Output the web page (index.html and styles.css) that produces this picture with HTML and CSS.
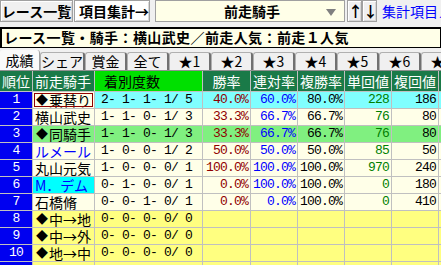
FILE: index.html
```html
<!DOCTYPE html>
<html lang="ja">
<head>
  <meta charset="UTF-8" />
  <title>集計 - 前走騎手</title>
  <link rel="stylesheet" href="styles.css">
</head>
<body>

  <!-- toolbar -->
  <div class="toolbar">
    <button class="btn btn-list">レース一覧</button>
    <button class="btn btn-agg">項目集計→</button>
    <div class="select"><span>前走騎手</span><i class="caret"></i></div>
    <button class="btn btn-arrow btn-up">↑</button>
    <button class="btn btn-arrow">↓</button>
    <a class="menu-link">集計項目メニュー</a>
  </div>

  <div class="title">レース一覧・騎手：横山武史／前走人気：前走１人気</div>

  <div class="tabs">
    <div class="tab active">成績</div>
    <div class="tab">シェア</div>
    <div class="tab">賞金</div>
    <div class="tab">全て</div>
    <div class="tab">★1</div>
    <div class="tab">★2</div>
    <div class="tab">★3</div>
    <div class="tab">★4</div>
    <div class="tab">★5</div>
    <div class="tab">★6</div>
    <div class="tab">★7</div>
  </div>

  <!-- result grid -->
  <div class="grid">
    <div class="row head">
      <div class="c-no">順位</div><div class="c-name">前走騎手</div><div class="c-rec">着別度数</div>
      <div>勝率</div><div>連対率</div><div>複勝率</div><div>単回値</div><div>複回値</div><div></div>
    </div>
    <div class="row cyan">
      <div class="c-no">1</div><div class="c-name selected"><span class="dia">◆</span>乗替り</div><div class="c-rec">2- 1- 1- 1/ 5</div>
      <div class="win">40.0%</div><div class="ren">60.0%</div><div class="num">80.0%</div><div class="tan">228</div><div class="num">186</div><div></div>
    </div>
    <div class="row cream">
      <div class="c-no">2</div><div class="c-name">横山武史</div><div class="c-rec">1- 1- 0- 1/ 3</div>
      <div class="win">33.3%</div><div class="ren">66.7%</div><div class="num">66.7%</div><div class="tan">76</div><div class="num">80</div><div></div>
    </div>
    <div class="row green">
      <div class="c-no">3</div><div class="c-name"><span class="dia">◆</span>同騎手</div><div class="c-rec">1- 1- 0- 1/ 3</div>
      <div class="win">33.3%</div><div class="ren">66.7%</div><div class="num">66.7%</div><div class="tan">76</div><div class="num">80</div><div></div>
    </div>
    <div class="row cream">
      <div class="c-no">4</div><div class="c-name blue">ルメール</div><div class="c-rec">1- 0- 0- 1/ 2</div>
      <div class="win">50.0%</div><div class="ren">50.0%</div><div class="num">50.0%</div><div class="tan">85</div><div class="num">50</div><div></div>
    </div>
    <div class="row cream">
      <div class="c-no">5</div><div class="c-name">丸山元気</div><div class="c-rec">1- 0- 0- 0/ 1</div>
      <div class="win">100.0%</div><div class="ren">100.0%</div><div class="num">100.0%</div><div class="tan">970</div><div class="num">240</div><div></div>
    </div>
    <div class="row cream">
      <div class="c-no">6</div><div class="c-name blue hl">M．デム</div><div class="c-rec">0- 1- 0- 0/ 1</div>
      <div class="win">0.0%</div><div class="ren">100.0%</div><div class="num">100.0%</div><div class="tan">0</div><div class="num">180</div><div></div>
    </div>
    <div class="row cream">
      <div class="c-no">7</div><div class="c-name">石橋脩</div><div class="c-rec">0- 0- 1- 0/ 1</div>
      <div class="win">0.0%</div><div class="ren">0.0%</div><div class="num">100.0%</div><div class="tan">0</div><div class="num">410</div><div></div>
    </div>
    <div class="row yellow">
      <div class="c-no">8</div><div class="c-name"><span class="dia">◆</span>中→地</div><div class="c-rec">0- 0- 0- 0/ 0</div>
      <div></div><div></div><div></div><div></div><div></div><div></div>
    </div>
    <div class="row yellow">
      <div class="c-no">9</div><div class="c-name"><span class="dia">◆</span>中→外</div><div class="c-rec">0- 0- 0- 0/ 0</div>
      <div></div><div></div><div></div><div></div><div></div><div></div>
    </div>
    <div class="row yellow">
      <div class="c-no">10</div><div class="c-name"><span class="dia">◆</span>地→中</div><div class="c-rec">0- 0- 0- 0/ 0</div>
      <div></div><div></div><div></div><div></div><div></div><div></div>
    </div>
    <div class="row yellow">
      <div class="c-no"></div><div class="c-name"></div><div class="c-rec"></div>
      <div></div><div></div><div></div><div></div><div></div><div></div>
    </div>
  </div>

</body>
</html>
```

FILE: styles.css
```css
body {
  font-family: "Noto Sans CJK JP", sans-serif;
  font-size: 14px;
  margin: 0;
  padding: 0;
  width: 441px;
  height: 265px;
  overflow: hidden;
  background-color: #f0f0f0;
  color: #000;
}

/* toolbar */
.toolbar {
  display: flex;
  align-items: stretch;
  height: 22px;
  white-space: nowrap;
  overflow: hidden;
}

.toolbar > * {
  flex: none;
}

.btn {
  font-family: inherit;
  font-size: 14px;
  font-weight: bold;
  line-height: 18px;
  padding: 0;
  margin: 0;
  box-sizing: border-box;
  border: 1px solid #a0a0a0;
  box-shadow: inset 1px 1px 0 #fff, inset -1px -1px 0 #d8d8d8;
  background-color: #f0f0f0;
  color: #000;
}

.btn-list { width: 73px; }
.btn-agg { width: 76px; margin-left: 1px; background-color: #fff; text-align: left; padding-left: 4px; }
.btn-arrow { width: 15px; font-size: 15px; overflow: hidden; }
.btn-up { margin-left: 2px; }

.select {
  width: 190px;
  margin-left: 5px;
  box-sizing: border-box;
  border: 1px solid #a0a0a0;
  background-color: #ffffe8;
  display: flex;
  align-items: center;
  justify-content: center;
  font-weight: bold;
  padding-left: 4px;
  position: relative;
}

.caret {
  position: absolute;
  right: 8px;
  top: 8px;
  border-left: 5px solid transparent;
  border-right: 5px solid transparent;
  border-top: 7px solid #808080;
}

.menu-link {
  margin-left: 5px;
  color: #0000ff;
  line-height: 22px;
}

/* title */
.title {
  margin-top: 5px;
  height: 21px;
  box-sizing: border-box;
  border: 1px solid #000;
  border-width: 2px 1px 1px 2px;
  background-color: #ffffe8;
  font-weight: bold;
  font-size: 14px;
  letter-spacing: 0.4px;
  line-height: 17px;
  padding-left: 2px;
  white-space: nowrap;
  overflow: hidden;
}

/* tabs */
.tabs {
  display: flex;
  margin-top: 2px;
  height: 20px;
  white-space: nowrap;
}

.tab {
  flex: 0 0 42px;
  box-sizing: border-box;
  margin-top: 2px;
  border: 1px solid #b0b0b0;
  border-right: 2px solid #707070;
  border-bottom: none;
  border-radius: 3px 3px 0 0;
  background-color: #f0f0f0;
  text-align: center;
  line-height: 17px;
}

.tab.active {
  flex-basis: 40px;
  margin-top: 0;
  border: none;
  border-right: 1px solid #a0a0a0;
  background-color: #fafafa;
  line-height: 20px;
}

/* grid */
.grid {
  display: grid;
  grid-template-columns: 32px 61px 107px 47px 46px 46px 46px 46px 1fr;
  grid-template-rows: 20px repeat(11, 16px);
  gap: 1px;
  border-top: 1px solid #909090;
  background-color: #c0c0c0;
}

.row { display: contents; }

.row > div {
  line-height: 16px;
  white-space: nowrap;
  overflow: hidden;
  text-align: right;
  padding-right: 2px;
  font-family: "Liberation Mono", monospace;
  font-size: 13px;
  letter-spacing: -0.8px;
}

.row > .c-name {
  font-family: "Noto Sans CJK JP", sans-serif;
  font-size: 14px;
  letter-spacing: 0;
  text-align: left;
  padding: 0 0 0 2px;
}

.dia {
  display: inline-block;
  width: 14px;
  font-size: 12px;
  text-align: center;
  vertical-align: top;
}

.row > .c-rec {
  text-align: left;
  padding-left: 6px;
}

.row > .c-no {
  background-color: #0000f0;
  color: #fff;
  text-align: center;
  padding: 0;
}

.head > div {
  background-color: #1a7a48;
  color: #fff;
  font-family: "Noto Sans CJK JP", sans-serif;
  font-size: 14px;
  letter-spacing: 0;
  line-height: 20px;
  text-align: center;
  padding: 0;
}

.head > .c-no { background-color: #1a7a48; font-family: "Noto Sans CJK JP", sans-serif; }
.head > .c-rec { background-color: #00e000; color: #000; text-align: left; padding-left: 9px; }
.head > .c-name { line-height: 20px; }

.cyan > div { background-color: #80ffff; }
.cream > div { background-color: #ffffe8; }
.green > div { background-color: #80f080; }
.yellow > div { background-color: #ffff80; }

.row > .selected {
  background-color: #ffffe8;
  outline: 1px solid #900000;
  outline-offset: -2px;
}

.row > .blue { color: #0000ff; }
.row > .hl { background-color: #00ffff; }

.win { color: #900000; }
.ren { color: #0000ff; }
.tan { color: #008000; }
.num { color: #000; }
```
